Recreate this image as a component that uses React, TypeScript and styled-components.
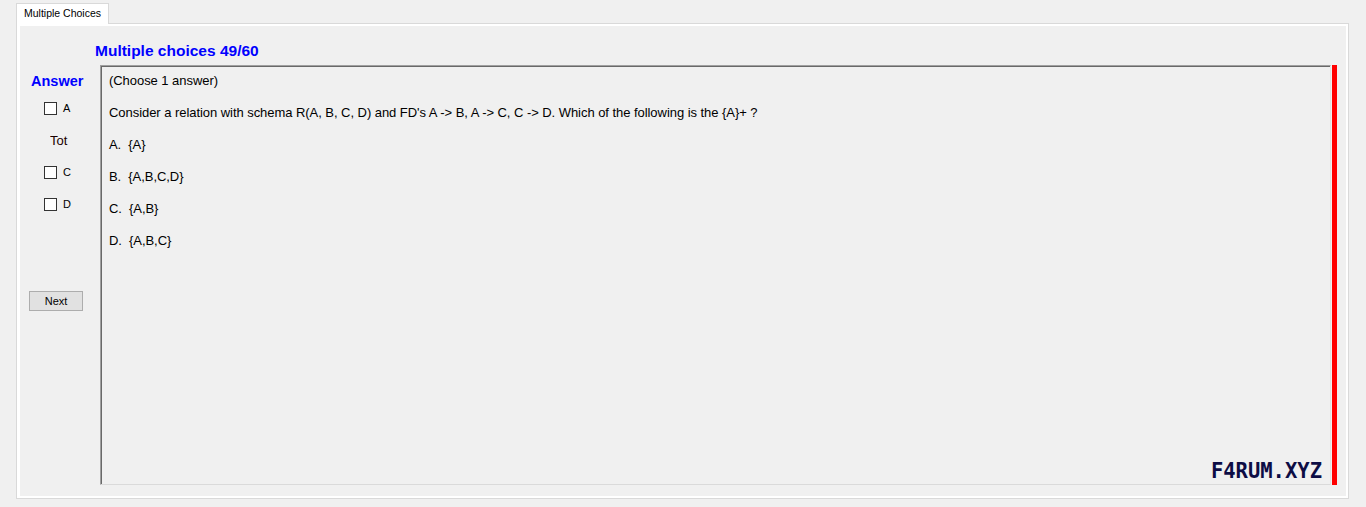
import React from 'react';
import styled, { createGlobalStyle } from 'styled-components';

const GlobalStyle = createGlobalStyle`
  html, body {
    margin: 0;
    padding: 0;
    background: #f0f0f0;
  }
  body {
    width: 1366px;
    height: 507px;
    overflow: hidden;
    font-family: "Liberation Sans", Arial, sans-serif;
  }
`;

const Window = styled.div`
  padding: 3px 0 0 16px;
`;

const TabStrip = styled.div`
  display: flex;
  position: relative;
  z-index: 1;
  margin-bottom: -1px;
`;

const Tab = styled.div`
  width: 84px;
  height: 20px;
  padding-left: 7px;
  border: 1px solid #d9d9d9;
  border-bottom: none;
  background: #ffffff;
  font-size: 10.5px;
  line-height: 18px;
  color: #000;
  white-space: nowrap;
`;

const TabBody = styled.div`
  width: 1326px;
  height: 470px;
  border: 1px solid #d9d9d9;
  padding: 2px 2px 2px 3px;
  background: #ffffff;
`;

const TabPage = styled.div`
  height: 100%;
  background: #f0f0f0;
  display: flex;
  flex-direction: column;
`;

const TitleRow = styled.div`
  height: 39px;
  box-sizing: border-box;
  padding: 16px 0 0 75px;
`;

const BlueHeading = styled.div<{ $size: number }>`
  color: #0000ff;
  font-weight: bold;
  font-size: ${({ $size }) => $size}px;
  line-height: 17px;
  white-space: nowrap;
`;

const MainRow = styled.div`
  display: flex;
  height: 420px;
`;

const AnswerPanel = styled.div`
  width: 80px;
  flex-shrink: 0;
  display: flex;
  flex-direction: column;
`;

const AnswerTitle = styled.div`
  padding: 8px 0 2px 11px;
`;

const OptionRow = styled.div<{ $indent: number }>`
  height: 32px;
  display: flex;
  align-items: center;
  padding-left: ${({ $indent }) => $indent}px;
  font-size: 11px;
  color: #000;
`;

const Box = styled.span`
  width: 11px;
  height: 11px;
  border: 1px solid #333333;
  background: #ffffff;
  margin-right: 6px;
`;

const TotalLabel = styled.span`
  font-size: 13px;
  color: #1a0000;
  width: 19px;
  overflow: hidden;
  white-space: nowrap;
`;

const NextButton = styled.button`
  margin: 71px 0 0 9px;
  width: 54px;
  height: 20px;
  padding: 0;
  border: 1px solid #adadad;
  background: #e1e1e1;
  font-family: "Liberation Sans", Arial, sans-serif;
  font-size: 11px;
  color: #000;
`;

const QuestionBox = styled.div`
  position: relative;
  flex: 1;
  border-top: 1px solid #a0a0a0;
  border-left: 1px solid #a0a0a0;
  border-right: 1px solid #e3e3e3;
  border-bottom: 1px solid #dadada;
  box-shadow: inset 1px 1px 0 #696969;
  padding: 7px 0 0 8px;
  background: #f0f0f0;
`;

const Line = styled.div`
  font-size: 13px;
  line-height: 16px;
  height: 16px;
  margin-bottom: 16px;
  color: #000;
  letter-spacing: -0.05px;
  white-space: pre;
`;

const Watermark = styled.div`
  position: absolute;
  right: 8px;
  bottom: 3px;
  font-family: "DejaVu Sans Mono", monospace;
  font-weight: bold;
  font-size: 20.5px;
  line-height: 20px;
  color: #0d0d45;
`;

const RedBar = styled.div`
  width: 5px;
  margin: 0 9px 0 1px;
  background: #ff0000;
`;

const options = [
  { key: 'A', label: 'A' },
  { key: 'B', label: 'Tot', total: true },
  { key: 'C', label: 'C' },
  { key: 'D', label: 'D' },
];

const lines = [
  '(Choose 1 answer)',
  "Consider a relation with schema R(A, B, C, D) and FD's A -> B, A -> C, C -> D. Which of the following is the {A}+ ?",
  'A.  {A}',
  'B.  {A,B,C,D}',
  'C.  {A,B}',
  'D.  {A,B,C}',
];

const App = () => {
  return (
    <>
      <GlobalStyle />
      <Window>
        <TabStrip>
          <Tab>Multiple Choices</Tab>
        </TabStrip>
        <TabBody>
          <TabPage>
            <TitleRow>
              <BlueHeading $size={15.5}>Multiple choices 49/60</BlueHeading>
            </TitleRow>
            <MainRow>
              <AnswerPanel>
                <AnswerTitle>
                  <BlueHeading $size={14.5}>Answer</BlueHeading>
                </AnswerTitle>
                {options.map((o) =>
                  o.total ? (
                    <OptionRow key={o.key} $indent={30}>
                      <TotalLabel>{o.label}</TotalLabel>
                    </OptionRow>
                  ) : (
                    <OptionRow key={o.key} $indent={24}>
                      <Box />
                      {o.label}
                    </OptionRow>
                  )
                )}
                <NextButton type="button">Next</NextButton>
              </AnswerPanel>
              <QuestionBox>
                {lines.map((l) => (
                  <Line key={l}>{l}</Line>
                ))}
                <Watermark>F4RUM.XYZ</Watermark>
              </QuestionBox>
              <RedBar />
            </MainRow>
          </TabPage>
        </TabBody>
      </Window>
    </>
  );
};

export default App;
